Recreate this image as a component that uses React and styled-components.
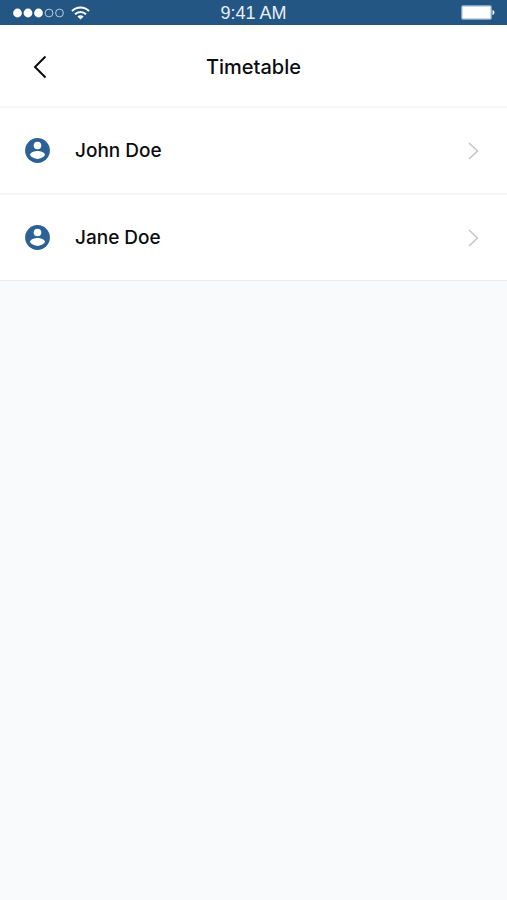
import React from "react";
import styled, { createGlobalStyle } from "styled-components";

const GlobalStyle = createGlobalStyle`
  *, *::before, *::after { box-sizing: border-box; }
  body {
    margin: 0;
    background: #f8fafc;
    font-family: Inter, "Liberation Sans", sans-serif;
    color: #0b0c0e;
  }
`;

const Screen = styled.div`
  min-height: 100vh;
  background: #f8fafc;
`;

const StatusBar = styled.div`
  display: grid;
  grid-template-columns: 1fr auto 1fr;
  align-items: center;
  height: 25px;
  padding: 0 12px;
  background: #245684;
  color: #fff;
`;

const StatusGroup = styled.div`
  display: flex;
  align-items: center;
  justify-content: ${({ $end }) => ($end ? "flex-end" : "flex-start")};
  gap: 7px;
`;

const Clock = styled.time`
  padding-top: 2px;
  font-family: "Liberation Sans", Arial, sans-serif;
  font-size: 18px;
  line-height: 21px;
  color: #e6eef6;
`;

const Header = styled.header`
  display: grid;
  grid-template-columns: 40px 1fr 40px;
  align-items: center;
  height: 83px;
  padding: 2px 20px 0;
  background: #fff;
  border-bottom: 2px solid #f5f6f7;
`;

const BackButton = styled.button`
  display: flex;
  align-items: center;
  justify-content: center;
  width: 40px;
  height: 40px;
  padding: 0;
  border: 0;
  background: none;
  color: #0b0c0e;
  cursor: pointer;
`;

const Title = styled.h1`
  margin: 0;
  font-size: 20px;
  line-height: 28px;
  font-weight: 500;
  text-align: center;
`;

const List = styled.ul`
  margin: 0;
  padding: 0;
  list-style: none;
  background: #fff;
`;

const Item = styled.li`
  border-bottom: 2px solid #f3f5f6;

  &:last-child {
    border-bottom: 1px solid #e9edef;
  }
`;

const PersonLink = styled.a`
  display: flex;
  align-items: center;
  height: 85px;
  padding: 0 28px 0 25px;
  color: inherit;
  text-decoration: none;
`;

const Name = styled.span`
  flex: 1;
  margin-left: 25px;
  font-size: 19px;
  line-height: 28px;
  font-weight: 500;
`;

const SignalIcon = () => (
  <svg width="52" height="12" viewBox="0 0 52 12" aria-hidden="true">
    <g fill="#fff">
      <circle cx="5.5" cy="6" r="4.4" />
      <circle cx="16" cy="6" r="4.4" />
      <circle cx="26.5" cy="6" r="4.4" />
    </g>
    <g fill="none" stroke="#b4cbe0" strokeWidth="1">
      <circle cx="37" cy="6" r="3.9" />
      <circle cx="47.5" cy="6" r="3.9" />
    </g>
  </svg>
);

const WifiIcon = () => (
  <svg width="19" height="14" viewBox="0 0 19 14" aria-hidden="true">
    <g fill="none" stroke="#fff" strokeWidth="2">
      <path d="M1 5C5.8.2 13.2.2 18 5" />
      <path d="M4 8.2c3.1-3.1 7.9-3.1 11 0" />
    </g>
    <path d="M6.4 10.4c1.8-1.6 4.4-1.6 6.2 0L9.5 13.6z" fill="#fff" />
  </svg>
);

const BatteryIcon = () => (
  <svg width="34" height="15" viewBox="0 0 34 15" aria-hidden="true">
    <rect x="0.5" y="0.5" width="30" height="14" rx="1.5" fill="#245684" stroke="#7fa3c6" />
    <rect x="1.2" y="1.2" width="28.6" height="12.6" rx="0.5" fill="#fff" />
    <path d="M31.5 5c2.6.6 2.6 4.4 0 5z" fill="#fff" />
  </svg>
);

const BackIcon = () => (
  <svg width="14" height="24" viewBox="0 0 14 24" aria-hidden="true">
    <path d="M12.5 1.5 2 12l10.5 10.5" fill="none" stroke="currentColor" strokeWidth="2" />
  </svg>
);

const PersonIcon = () => (
  <svg width="25" height="25" viewBox="0 0 25 25" aria-hidden="true">
    <circle cx="12.5" cy="12.5" r="12.4" fill="#2b6194" />
    <circle cx="12.5" cy="7.5" r="3.8" fill="#fff" />
    <path d="M5 16.9c0-2.6 5-3.9 7.5-3.9s7.5 1.3 7.5 3.9a9 9 0 0 1-15 0z" fill="#fff" />
  </svg>
);

const ChevronIcon = () => (
  <svg width="11" height="18" viewBox="0 0 11 18" aria-hidden="true">
    <path d="M1 1l8.5 8L1 17" fill="none" stroke="#c3c6ca" strokeWidth="1.6" />
  </svg>
);

const people = [
  { id: "john", name: "John Doe" },
  { id: "jane", name: "Jane Doe" },
];

export default function App() {
  return (
    <>
      <GlobalStyle />
      <Screen>
        <StatusBar>
          <StatusGroup>
            <SignalIcon />
            <WifiIcon />
          </StatusGroup>
          <Clock dateTime="09:41">9:41 AM</Clock>
          <StatusGroup $end>
            <BatteryIcon />
          </StatusGroup>
        </StatusBar>
        <Header>
          <BackButton type="button" aria-label="Back">
            <BackIcon />
          </BackButton>
          <Title>Timetable</Title>
        </Header>
        <main>
          <List>
            {people.map(({ id, name }) => (
              <Item key={id}>
                <PersonLink href={`#${id}`}>
                  <PersonIcon />
                  <Name>{name}</Name>
                  <ChevronIcon />
                </PersonLink>
              </Item>
            ))}
          </List>
        </main>
      </Screen>
    </>
  );
}
